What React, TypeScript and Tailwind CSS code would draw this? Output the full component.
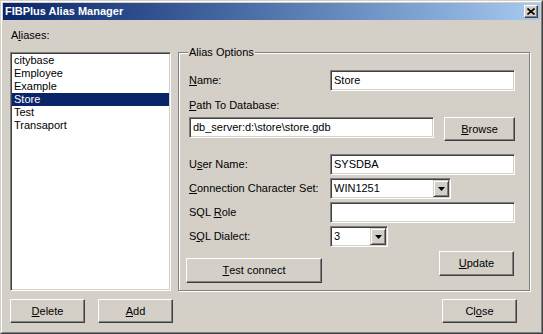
import React from 'react';

const font = { fontFamily: '"Liberation Sans", Arial, sans-serif' };

function U({ children }: { children: React.ReactNode }) {
  return <span className="underline underline-offset-[1px]">{children}</span>;
}

function Button({ className = '', children }: { className?: string; children: React.ReactNode }) {
  return (
    <div
      className={`flex items-center justify-center bg-[#d4d0c8] border border-t-white border-l-white border-r-[#404040] border-b-[#404040] shadow-[inset_-1px_-1px_0_#808080] text-[11px] leading-[13px] text-black ${className}`}
    >
      {children}
    </div>
  );
}

function Field({ className = '', children }: { className?: string; children?: React.ReactNode }) {
  return (
    <div
      className={`flex items-center bg-white border border-t-[#808080] border-l-[#808080] border-r-white border-b-white shadow-[inset_1px_1px_0_#404040,inset_-1px_-1px_0_#d4d0c8] pl-[3px] text-[11px] leading-[13px] text-black ${className}`}
    >
      {children}
    </div>
  );
}

function Combo({ className = '', value }: { className?: string; value: string }) {
  return (
    <div
      className={`flex items-stretch bg-white border border-t-[#808080] border-l-[#808080] border-r-white border-b-white shadow-[inset_1px_1px_0_#404040,inset_-1px_-1px_0_#d4d0c8] p-[1px] text-[11px] leading-[13px] text-black ${className}`}
    >
      <div className="flex-1 flex items-center pl-[2px]">{value}</div>
      <div className="w-[16px] flex items-center justify-center bg-[#d4d0c8] border border-t-[#d4d0c8] border-l-[#d4d0c8] border-r-[#404040] border-b-[#404040] shadow-[inset_1px_1px_0_#fff,inset_-1px_-1px_0_#808080]">
        <svg width="7" height="4" viewBox="0 0 7 4">
          <path d="M0 0h7L3.5 4z" fill="#000" />
        </svg>
      </div>
    </div>
  );
}

function Row({ label, children }: { label: React.ReactNode; children: React.ReactNode }) {
  return (
    <div className="flex items-center justify-between h-[21px]">
      <div className="text-[11px] leading-[13px]">{label}</div>
      {children}
    </div>
  );
}

export default function App() {
  const aliases = ['citybase', 'Employee', 'Example', 'Store', 'Test', 'Transaport'];

  return (
    <div style={font} className="w-[543px] h-[334px] bg-[#d4d0c8] text-black select-none">
      <div className="w-full h-full border border-t-[#d4d0c8] border-l-[#d4d0c8] border-r-[#404040] border-b-[#404040]">
        <div className="w-full h-full border border-t-white border-l-white border-r-[#808080] border-b-[#808080] p-[1px] flex flex-col">
          {/* title bar */}
          <div className="h-[17px] flex items-center justify-between bg-linear-to-r from-[#0a246a] to-[#a6caf0] pl-[2px] pr-[2px]">
            <span className="text-white font-bold text-[11px] leading-[13px]">FIBPlus Alias Manager</span>
            <div className="w-[14px] h-[13px] flex items-center justify-center bg-[#d4d0c8] border border-t-white border-l-white border-r-[#404040] border-b-[#404040] shadow-[inset_-1px_-1px_0_#808080]">
              <svg width="8" height="7" viewBox="0 0 8 7">
                <path d="M0.5 0.5l7 6M7.5 0.5l-7 6" stroke="#000" strokeWidth="1.6" />
              </svg>
            </div>
          </div>

          {/* client */}
          <div className="flex-1 flex flex-col px-[7px] pt-[9px]">
            <div className="text-[11px] leading-[13px] pl-[1px]">
              A<U>l</U>iases:
            </div>

            <div className="flex gap-[7px] mt-[10px] h-[239px]">
              {/* list box */}
              <div className="w-[161px] bg-white border border-t-[#808080] border-l-[#808080] border-r-white border-b-white shadow-[inset_1px_1px_0_#404040,inset_-1px_-1px_0_#d4d0c8] p-[1px]">
                {aliases.map((a) => (
                  <div
                    key={a}
                    className={`h-[13px] text-[11px] leading-[13px] pl-[2px] ${a === 'Store' ? 'bg-[#0a246a] text-white' : ''}`}
                  >
                    {a}
                  </div>
                ))}
              </div>

              {/* group box */}
              <div className="relative w-[352px] border border-[#808080] shadow-[inset_1px_1px_0_#fff,1px_1px_0_#fff] pt-[17px] pl-[10px] pr-[14px]">
                <div className="absolute left-[9px] -top-[7px] px-[1px] bg-[#d4d0c8] text-[11px] leading-[13px]">
                  Alias Options
                </div>

                <Row label={<><U>N</U>ame:</>}>
                  <Field className="w-[185px] h-[21px]">Store</Field>
                </Row>

                <div className="mt-[8px] text-[11px] leading-[13px]">
                  <U>P</U>ath To Database:
                </div>
                <div className="mt-[5px] flex justify-between items-start h-[24px]">
                  <Field className="w-[245px] h-[21px]">db_server:d:\store\store.gdb</Field>
                  <Button className="w-[71px] h-[24px]">
                    <U>B</U>rowse
                  </Button>
                </div>

                <div className="mt-[13px] flex flex-col gap-[3px]">
                  <Row label={<>U<U>s</U>er Name:</>}>
                    <Field className="w-[185px] h-[21px]">SYSDBA</Field>
                  </Row>
                  <Row label={<><U>C</U>onnection Character Set:</>}>
                    <div className="w-[185px] flex">
                      <Combo className="w-[121px] h-[21px]" value="WIN1251" />
                    </div>
                  </Row>
                  <Row label={<>SQL <U>R</U>ole</>}>
                    <Field className="w-[185px] h-[21px]" />
                  </Row>
                  <Row label={<>S<U>Q</U>L Dialect:</>}>
                    <div className="w-[185px] flex">
                      <Combo className="w-[58px] h-[21px]" value="3" />
                    </div>
                  </Row>
                </div>

                <div className="mt-[4px] flex justify-between items-start">
                  <Button className="w-[136px] h-[25px] mt-[7px] -ml-[3px]">
                    <U>T</U>est connect
                  </Button>
                  <Button className="w-[75px] h-[25px] mr-[1px]">
                    <U>U</U>pdate
                  </Button>
                </div>
              </div>
            </div>

            <div className="mt-[8px] flex items-start">
              <Button className="w-[75px] h-[24px]">
                <U>D</U>elete
              </Button>
              <Button className="w-[75px] h-[24px] ml-[13px]">
                <U>A</U>dd
              </Button>
              <Button className="w-[75px] h-[24px] ml-auto mr-[16px]">
                Cl<U>o</U>se
              </Button>
            </div>
          </div>
        </div>
      </div>
    </div>
  );
}
